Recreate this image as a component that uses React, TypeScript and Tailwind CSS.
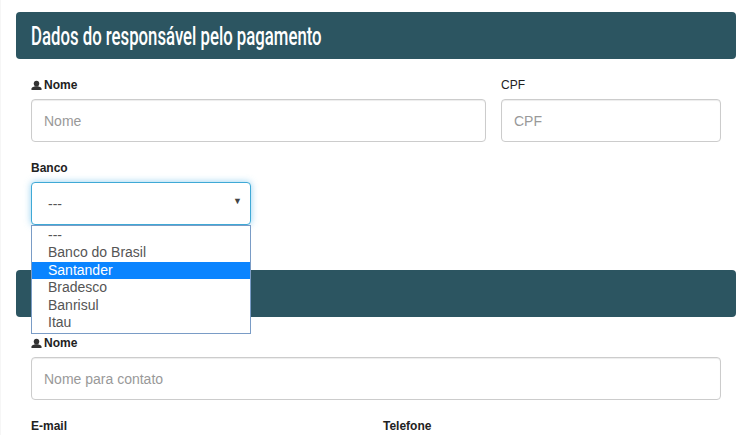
const bancos = ["---", "Banco do Brasil", "Santander", "Bradesco", "Banrisul", "Itau"]

function UserIcon() {
  return (
    <svg viewBox="0 0 12 11" className="h-[11px] w-[11px] fill-[#333]">
      <ellipse cx="6" cy="3.4" rx="3" ry="3.2" />
      <path d="M.5 10.5V9c0-1 .8-1.5 1.8-1.9l2-.8h3.4l2 .8c1 .4 1.8.9 1.8 1.9v1.5z" />
    </svg>
  )
}

function SectionTitle({ title }: { title?: string }) {
  return (
    <div className="flex h-[47px] w-[720px] items-center overflow-hidden rounded-[4px] bg-[#2c5561] pl-[15px]">
      {title && (
        <h2 className="mt-[2px] origin-left scale-x-[0.67] whitespace-nowrap text-[25px] font-medium text-white font-['Roboto',sans-serif]">
          {title}
        </h2>
      )}
    </div>
  )
}

function Label({ text, icon, className }: { text: string; icon?: boolean; className?: string }) {
  return (
    <label className={`flex h-[14px] items-center gap-[2px] whitespace-nowrap text-[12px] font-bold leading-[14px] text-[#222] ${className ?? ""}`}>
      {icon && <UserIcon />}
      {text}
    </label>
  )
}

function Input({ placeholder, className }: { placeholder: string; className?: string }) {
  return (
    <input
      placeholder={placeholder}
      className={`h-[43px] rounded-[4px] border border-[#ccc] bg-white px-3 text-[14px] text-[#555] shadow-[inset_0_1px_1px_rgba(0,0,0,0.075)] outline-none placeholder:text-[#999] ${className ?? ""}`}
    />
  )
}

export default function App() {
  return (
    <div className="h-[435px] w-[750px] overflow-hidden border-l border-[#f6f6f6] bg-white pl-[15px] pt-3 font-['Liberation_Sans',Arial,sans-serif]">
      <SectionTitle title="Dados do responsável pelo pagamento" />

      <div className="mt-[19px] flex gap-[15px] pl-[15px]">
        <div className="flex w-[455px] flex-col gap-[7px]">
          <Label text="Nome" icon />
          <Input placeholder="Nome" className="w-full" />
        </div>
        <div className="flex w-[220px] flex-col gap-[7px]">
          <Label text="CPF" className="font-normal" />
          <Input placeholder="CPF" className="w-full" />
        </div>
      </div>

      <div className="relative z-10 mt-[19px] ml-[15px] flex w-[220px] flex-col gap-[7px]">
        <Label text="Banco" />
        <div className="relative flex h-[43px] items-center justify-between rounded-[4px] border border-[#3fa9d6] bg-white pl-[16px] pr-[8px] text-[14px] text-[#555] shadow-[0_0_7px_rgba(102,190,233,0.7)]">
          <span className="mt-[2px]">---</span>
          <span className="mb-[4px] text-[9px] text-[#444]">▼</span>
        </div>
        <ul className="absolute left-0 top-[64px] w-[220px] border border-[#7a9cc6] bg-white pb-[1.5px] pt-[0.5px] text-[14px] leading-[17.5px] text-[#555]">
          {bancos.map((b) => (
            <li key={b} className={`pl-[16px] ${b === "Santander" ? "bg-[#0a84ff] text-white" : ""}`}>
              {b}
            </li>
          ))}
        </ul>
      </div>

      <div className="mt-[45px]">
        <SectionTitle />
      </div>

      <div className="mt-[19px] ml-[15px] flex w-[690px] flex-col gap-[7px]">
        <Label text="Nome" icon />
        <Input placeholder="Nome para contato" className="w-full" />
      </div>

      <div className="mt-[19px] ml-[15px] flex gap-[317px]">
        <Label text="E-mail" className="w-[35px]" />
        <Label text="Telefone" />
      </div>
    </div>
  )
}
